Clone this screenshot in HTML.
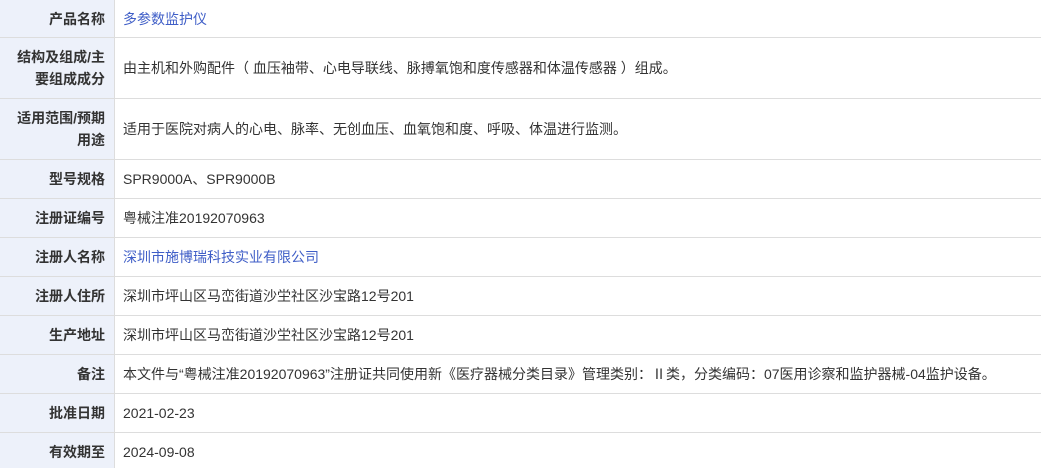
<!DOCTYPE html>
<html><head><meta charset="utf-8"><style>
body{margin:0;background:#fff;font-family:"Liberation Sans","Noto Sans CJK SC",sans-serif;font-size:14px;color:#333;}
.w{position:relative;width:1041px;height:468px;overflow:hidden;}
.r{position:absolute;left:0;width:1041px;border-bottom:1px solid #ddd;display:flex;}
.l{width:92px;padding-left:13px;padding-right:9px;background:#edf1fa;border-right:1px solid #ddd;text-align:right;font-weight:bold;display:flex;align-items:center;justify-content:flex-end;line-height:22px;color:#333;}
.v{padding-left:8px;display:flex;align-items:center;}
a{color:#3f5ec7;text-decoration:none;}
</style></head><body><div class="w">
<div class="r" style="top:0;height:37px"><div class="l">产品名称</div><div class="v"><a>多参数监护仪</a></div></div>
<div class="r" style="top:38px;height:60px"><div class="l"><span>结构及组成/主<br>要组成成分</span></div><div class="v">由主机和外购配件（ 血压袖带、心电导联线、脉搏氧饱和度传感器和体温传感器 ）组成。</div></div>
<div class="r" style="top:99px;height:60px"><div class="l"><span>适用范围/预期<br>用途</span></div><div class="v">适用于医院对病人的心电、脉率、无创血压、血氧饱和度、呼吸、体温进行监测。</div></div>
<div class="r" style="top:160px;height:38px"><div class="l">型号规格</div><div class="v">SPR9000A、SPR9000B</div></div>
<div class="r" style="top:199px;height:38px"><div class="l">注册证编号</div><div class="v">粤械注准20192070963</div></div>
<div class="r" style="top:238px;height:38px"><div class="l">注册人名称</div><div class="v"><a>深圳市施博瑞科技实业有限公司</a></div></div>
<div class="r" style="top:277px;height:38px"><div class="l">注册人住所</div><div class="v">深圳市坪山区马峦街道沙坣社区沙宝路12号201</div></div>
<div class="r" style="top:316px;height:38px"><div class="l">生产地址</div><div class="v">深圳市坪山区马峦街道沙坣社区沙宝路12号201</div></div>
<div class="r" style="top:355px;height:38px"><div class="l">备注</div><div class="v">本文件与“粤械注准20192070963”注册证共同使用新《医疗器械分类目录》管理类别：Ⅱ类，分类编码：07医用诊察和监护器械-04监护设备。</div></div>
<div class="r" style="top:394px;height:38px"><div class="l">批准日期</div><div class="v">2021-02-23</div></div>
<div class="r" style="top:433px;height:38px"><div class="l">有效期至</div><div class="v">2024-09-08</div></div>
</div></body></html>
